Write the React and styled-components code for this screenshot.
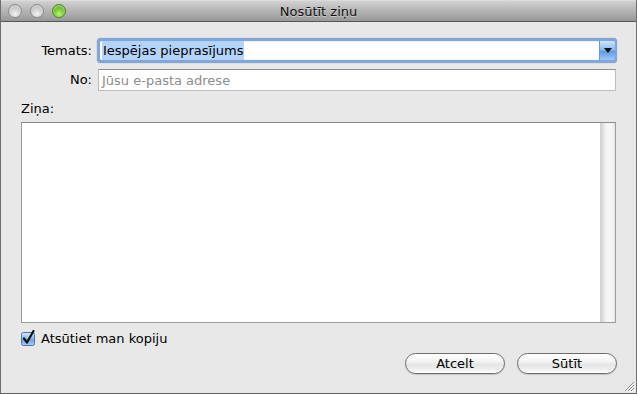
import React from "react";
import styled, { createGlobalStyle } from "styled-components";

const Global = createGlobalStyle`
  html, body { margin: 0; padding: 0; background: #e8e8e8; }
  body { font-family: "DejaVu Sans", "Liberation Sans", sans-serif; font-size: 13px; color: #000; }
  * { box-sizing: border-box; }
`;

const Window = styled.div`
  position: relative;
  width: 637px;
  height: 394px;
  display: flex;
  flex-direction: column;
  background: #e8e8e8;
  border-left: 1px solid #6e6e6e;
  border-right: 1px solid #6e6e6e;
  border-bottom: 1px solid #5e5e5e;
  overflow: hidden;
`;

const TitleBar = styled.div`
  position: relative;
  height: 22px;
  flex: none;
  display: flex;
  align-items: center;
  justify-content: center;
  background: linear-gradient(to bottom, #e4e4e4 0px, #d2d2d2 1px, #bcbcbc 8px, #a9a9a9 15px, #979797 21px);
  border-bottom: 1px solid #575757;
  margin: 0 -1px;
  border-top-left-radius: 4px;
  border-top-right-radius: 4px;
`;

const Lights = styled.div`
  position: absolute;
  left: 8px;
  top: 4px;
  display: flex;
  gap: 8px;
`;

const Light = styled.span`
  width: 14px;
  height: 14px;
  border-radius: 50%;
  border: 1px solid ${(p) => (p.$green ? "#4c8a22" : "#8c8c8c")};
  background: ${(p) =>
    p.$green
      ? "radial-gradient(circle at 50% 75%, #c4f27a 0%, #7fcf36 40%, #4f9a1c 100%)"
      : "radial-gradient(circle at 50% 75%, #f2f2f2 0%, #d2d2d2 45%, #a8a8a8 100%)"};
  box-shadow: inset 0 1px 2px rgba(255,255,255,0.6);
`;

const Title = styled.div`
  font-size: 13px;
  color: #111;
  text-shadow: 0 1px 0 rgba(255,255,255,0.45);
  margin-top: 1px;
`;

const Content = styled.div`
  flex: 1;
  display: flex;
  flex-direction: column;
  padding: 16px 20px 0 20px;
`;

const FormGrid = styled.div`
  display: grid;
  grid-template-columns: 71px 1fr;
  column-gap: 5px;
  row-gap: 6px;
  align-items: center;
`;

const Label = styled.label`
  text-align: right;
  line-height: 16px;
`;

const SelectRing = styled.div`
  height: 25px;
  margin-right: -1px;
  border: 3px solid #80a6da;
  border-radius: 4px;
  box-shadow: 0 0 1px 0 #5d8acb, inset 0 0 1px 0 #5d8acb;
  display: flex;
  background: #fff;
`;

const SelectValue = styled.div`
  flex: 1;
  display: flex;
  align-items: center;
  padding-left: 2px;
`;

const Highlight = styled.span`
  background: #b4d3f9;
  padding: 1px 1px;
  line-height: 17px;
`;

const ArrowButton = styled.div`
  width: 16px;
  margin-right: -1px;
  display: flex;
  align-items: center;
  justify-content: center;
  background: linear-gradient(to bottom, #cfe3fb 0%, #8fbaf0 45%, #5e9be6 55%, #9cc8f8 100%);
  border-left: 1px solid #6a95cf;
  border-radius: 0 2px 2px 0;
`;

const TextField = styled.div`
  height: 22px;
  margin-left: 1px;
  background: #fff;
  border: 1px solid #bdbdbd;
  border-top-color: #8e8e8e;
  display: flex;
  align-items: center;
  padding-left: 3px;
  color: #8c8c8c;
`;

const SectionLabel = styled.div`
  margin-top: 10px;
  line-height: 16px;
`;

const MessageBox = styled.div`
  margin-top: 5px;
  height: 201px;
  background: #fff;
  border: 1px solid #9c9c9c;
  border-top-color: #8a8a8a;
  display: flex;
  justify-content: flex-end;
`;

const ScrollTrack = styled.div`
  width: 15px;
  background: linear-gradient(to right, #cfcfcf 0px, #dadada 2px, #e6e6e6 4px, #f3f3f3 6px, #f8f8f8 10px, #eeeeee 14px, #e2e2e2 15px);
`;

const CheckRow = styled.label`
  margin-top: 8px;
  display: flex;
  align-items: center;
  gap: 5px;
  height: 15px;
  line-height: 15px;
`;

const Buttons = styled.div`
  margin-top: 7px;
  margin-right: -1px;
  display: flex;
  justify-content: flex-end;
  gap: 12px;
`;

const Button = styled.button`
  width: 100px;
  height: 21px;
  font-family: inherit;
  font-size: 13px;
  color: #000;
  border: 1px solid #6c6c6c;
  border-radius: 11px;
  background: linear-gradient(to bottom, #ffffff 0%, #f4f4f4 40%, #e4e4e4 55%, #efefef 80%, #ffffff 100%);
  box-shadow: 0 1px 1px rgba(0,0,0,0.15);
  padding: 0;
  line-height: 18px;
`;

const Grip = styled.svg`
  position: absolute;
  right: 1px;
  bottom: 1px;
`;

export default function App() {
  return (
    <>
      <Global />
      <Window>
        <TitleBar>
          <Lights>
            <Light />
            <Light />
            <Light $green />
          </Lights>
          <Title>Nosūtīt ziņu</Title>
        </TitleBar>
        <Content>
          <FormGrid>
            <Label>Temats:</Label>
            <SelectRing>
              <SelectValue>
                <Highlight>Iespējas pieprasījums</Highlight>
              </SelectValue>
              <ArrowButton>
                <svg width="8" height="5" viewBox="0 0 8 5">
                  <path d="M0 0 H8 L4 5 Z" fill="#111" />
                </svg>
              </ArrowButton>
            </SelectRing>
            <Label>No:</Label>
            <TextField>Jūsu e-pasta adrese</TextField>
          </FormGrid>
          <SectionLabel>Ziņa:</SectionLabel>
          <MessageBox>
            <ScrollTrack />
          </MessageBox>
          <CheckRow>
            <svg width="15" height="16" viewBox="0 0 15 16" style={{ marginTop: -2 }}>
              <defs>
                <linearGradient id="cb" x1="0" y1="0" x2="0" y2="1">
                  <stop offset="0" stopColor="#d6e8fb" />
                  <stop offset="0.5" stopColor="#8ab8ee" />
                  <stop offset="0.55" stopColor="#6aa2e6" />
                  <stop offset="1" stopColor="#a8d0f8" />
                </linearGradient>
              </defs>
              <rect x="0.5" y="2.5" width="13" height="13" rx="2" fill="url(#cb)" stroke="#55739e" />
              <path d="M3 8.5 L6 12.5 L12.5 1" fill="none" stroke="#111" strokeWidth="2.2" strokeLinecap="round" strokeLinejoin="round" />
            </svg>
            Atsūtiet man kopiju
          </CheckRow>
          <Buttons>
            <Button>Atcelt</Button>
            <Button>Sūtīt</Button>
          </Buttons>
        </Content>
        <Grip width="11" height="11" viewBox="0 0 11 11">
          <path d="M10 1 L1 10 M10 4 L4 10 M10 7 L7 10" stroke="#8a8a8a" strokeWidth="1" />
          <path d="M10.8 1.8 L1.8 10.8 M10.8 4.8 L4.8 10.8 M10.8 7.8 L7.8 10.8" stroke="#fff" strokeWidth="0.8" />
        </Grip>
      </Window>
    </>
  );
}
